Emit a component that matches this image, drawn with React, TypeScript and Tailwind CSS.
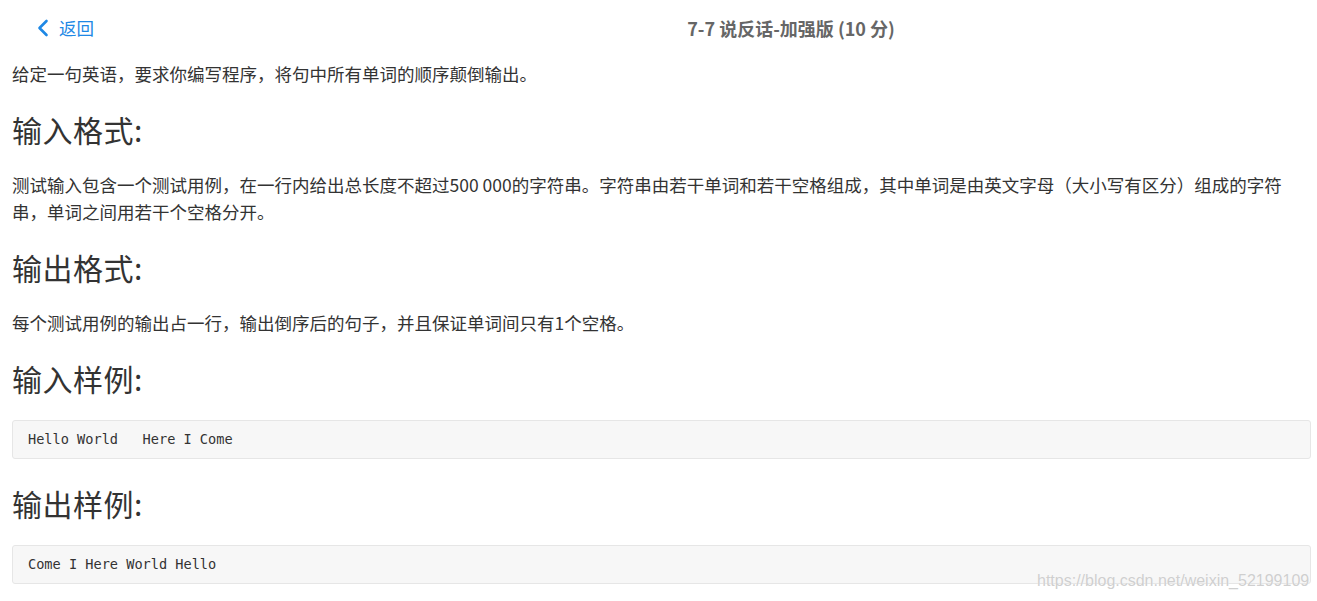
import React from "react";

const FONT = '"Noto Sans CJK SC", "Liberation Sans", sans-serif';
const MONO = '"DejaVu Sans Mono", "Liberation Mono", monospace';

function Heading({ children }: { children: React.ReactNode }) {
  return <h3 className="text-[30px] leading-9 font-normal text-[#333] tracking-[0.5px]">{children}</h3>;
}

function Para({ children }: { children: React.ReactNode }) {
  return <p className="text-[17.5px] leading-[27px] text-[#333]">{children}</p>;
}

function CodeBlock({ text }: { text: string }) {
  return (
    <pre
      className="h-[39px] flex items-center px-[15px] bg-[#f7f7f7] border border-[#e6e6e6] rounded-[3px] text-[13.6px] text-[#333] whitespace-pre"
      style={{ fontFamily: MONO }}
    >
      {text}
    </pre>
  );
}

export default function App() {
  return (
    <div className="relative min-h-screen bg-white" style={{ fontFamily: FONT }}>
      {/* Top bar: back link + problem title */}
      <div className="h-14 flex items-center">
        <div className="w-[265px] flex items-center pl-[37px] gap-[10px] text-[#1e88e5] text-[17.5px]">
          <svg width="12" height="18" viewBox="0 0 12 18" fill="none" stroke="currentColor" strokeWidth="2.6" strokeLinecap="round" strokeLinejoin="round">
            <polyline points="9.5,2 2.5,9 9.5,16" />
          </svg>
          <span>返回</span>
        </div>
        <div className="flex-1 text-center text-[18px] font-bold text-[#666]">7-7 说反话-加强版 (10 分)</div>
      </div>

      <div className="pl-3 pr-[6px] pt-[4px] flex flex-col gap-6">
        <Para>给定一句英语，要求你编写程序，将句中所有单词的顺序颠倒输出。</Para>
        <Heading>输入格式:</Heading>
        <Para>
          测试输入包含一个测试用例，在一行内给出总长度不超过500 000的字符串。字符串由若干单词和若干空格组成，其中单词是由英文字母（大小写有区分）组成的字符串，单词之间用若干个空格分开。
        </Para>
        <Heading>输出格式:</Heading>
        <Para>每个测试用例的输出占一行，输出倒序后的句子，并且保证单词间只有1个空格。</Para>
        <Heading>输入样例:</Heading>
        <CodeBlock text="Hello World   Here I Come" />
        <div className="mt-[2px]">
          <Heading>输出样例:</Heading>
        </div>
        <CodeBlock text="Come I Here World Hello" />
      </div>

      {/* Watermark */}
      <div
        className="absolute left-[1037px] top-[569px] text-[16px] text-[#cfcfcf] whitespace-nowrap"
        style={{ fontFamily: '"Liberation Sans", Arial, sans-serif', textShadow: "0 0 1px #fff" }}
      >
        https://blog.csdn.net/weixin_52199109
      </div>
    </div>
  );
}
